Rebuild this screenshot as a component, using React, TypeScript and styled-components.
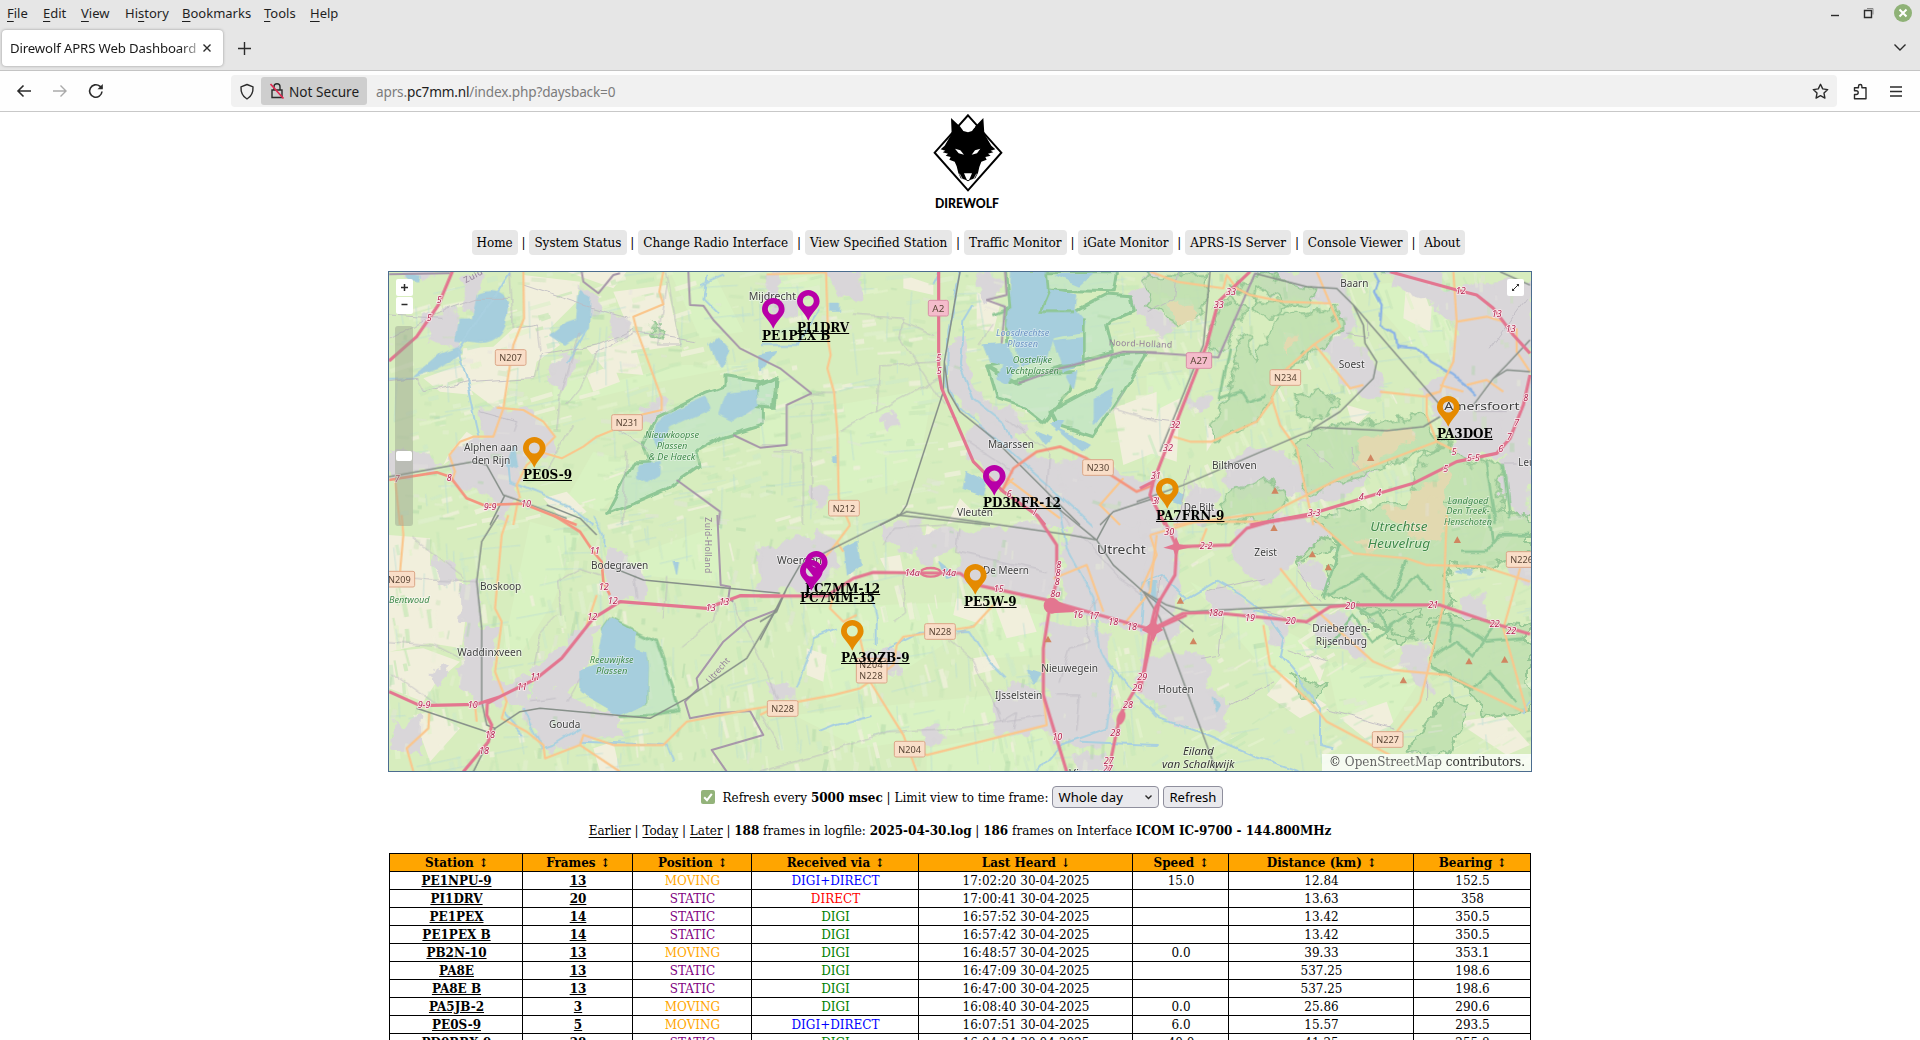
import React from 'react';
import styled, { createGlobalStyle } from 'styled-components';

const serif = '"DejaVu Serif Condensed", "DejaVu Serif", serif';
const ui = '"Noto Sans", "Open Sans", sans-serif';

const Global = createGlobalStyle`
  html, body { margin: 0; padding: 0; background: #fff; }
  body { width: 1920px; height: 1040px; overflow: hidden; }
  * { box-sizing: border-box; }
`;

const Window = styled.div`
  width: 1920px;
  height: 1040px;
  overflow: hidden;
  display: flex;
  flex-direction: column;
  font-family: ${serif};
  font-size: 13.33px;
  color: #000;
`;

/* ---------- browser chrome ---------- */
const TitleBar = styled.div`
  height: 28px;
  flex: none;
  display: flex;
  background: #e6e6e6;
  font: 13px/27px ${ui};
  color: #1f1f1f;
  padding-left: 7px;
`;
const MenuItem = styled.span<{ $w: number }>`
  width: ${(p) => p.$w}px;
  white-space: nowrap;
`;
const Accel = styled.span`
  text-decoration: underline;
  text-underline-offset: 3px;
`;
const WindowButtons = styled.div`
  margin-left: auto;
`;
const TabStrip = styled.div`
  height: 43px;
  flex: none;
  display: flex;
  background: #e6e6e6;
  border-bottom: 1px solid #c4c4c4;
  padding: 2px 0 0 2px;
`;
const Tab = styled.div`
  width: 221px;
  height: 36px;
  background: #fff;
  border-radius: 4px;
  box-shadow: 0 0 3px rgba(0, 0, 0, 0.35);
  display: flex;
  align-items: center;
  padding: 0 11px 0 8px;
  justify-content: space-between;
`;
const TabTitle = styled.span`
  width: 188px;
  overflow: hidden;
  white-space: nowrap;
  font: 13.2px/20px ${ui};
  letter-spacing: -0.13px;
  color: #1a1a1a;
  mask-image: linear-gradient(to right, #000 170px, rgba(0, 0, 0, 0.3) 188px);
`;
const NewTab = styled.div`
  padding: 12px 0 0 15px;
`;
const TabList = styled.div`
  margin-left: auto;
  padding: 13px 13px 0 0;
`;
const Toolbar = styled.div`
  height: 41px;
  flex: none;
  display: flex;
  align-items: center;
  background: #fefefe;
  border-bottom: 1px solid #c8c8c8;
  padding: 0 17px 0 16px;
`;
const NavButtons = styled.div`
  width: 215px;
  display: flex;
  gap: 20px;
`;
const UrlBar = styled.div`
  width: 1606px;
  height: 32px;
  border-radius: 4px;
  background: #f1f1f1;
  display: flex;
  align-items: center;
  padding: 0 8px;
`;
const Identity = styled.div`
  width: 106px;
  height: 28px;
  margin-left: 6px;
  border-radius: 3px;
  background: #cecece;
  display: flex;
  align-items: center;
  gap: 4px;
  padding-left: 8px;
  font: 13.6px/29px ${ui};
  color: #1d1d1d;
  white-space: nowrap;
`;
const Url = styled.span`
  margin-left: 9px;
  flex: 1;
  font: 13.6px/29px ${ui};
  letter-spacing: -0.16px;
  color: #7c7c7c;
  b { font-weight: 400; color: #1d1d1d; }
`;
const ToolbarEnd = styled.div`
  display: flex;
  gap: 20px;
  margin-left: 15px;
`;
const Icon = styled.svg`
  display: block;
  flex: none;
  fill: none;
  stroke: #2b2b2b;
  stroke-width: 1.4;
`;

/* ---------- page ---------- */
const Page = styled.div`
  flex: 1;
  display: flex;
  flex-direction: column;
  align-items: center;
`;
const Logo = styled.svg`
  width: 140px;
  height: 106px;
  margin: -1px 0 0 20px;
  flex: none;
`;
const Nav = styled.nav`
  display: flex;
  justify-content: space-between;
  align-items: center;
  width: 994px;
  height: 25px;
  margin: 13px 0 0 17px;
`;
const NavLink = styled.a`
  background: #e7e7e7;
  border-radius: 4px;
  height: 25px;
  line-height: 25px;
  padding: 0 5px;
  white-space: nowrap;
`;
const MapBox = styled.div`
  position: relative;
  width: 1144px;
  height: 501px;
  margin-top: 16px;
  flex: none;
  border: 1px solid #4b6c8f;
  overflow: hidden;
`;
const MapCanvas = styled.svg`
  display: block;
  width: 1142px;
  height: 499px;
`;
const Pin = styled.div<{ $x: number; $y: number }>`
  position: absolute;
  left: ${(p) => p.$x - 389}px;
  top: ${(p) => p.$y - 272}px;
  svg { display: block; }
`;
const PinLabel = styled.b`
  display: block;
  margin-top: -2px;
  line-height: 16px;
  white-space: nowrap;
  text-decoration: underline;
`;
const MapButton = styled.div<{ $x: number; $y: number }>`
  position: absolute;
  left: ${(p) => p.$x}px;
  top: ${(p) => p.$y}px;
  width: 17px;
  height: 17px;
  border-radius: 2px;
  background: #fff;
  display: flex;
  align-items: center;
  justify-content: center;
`;
const Slider = styled.div`
  position: absolute;
  left: 6px;
  top: 54px;
  width: 18px;
  height: 200px;
  border-radius: 3px;
  padding: 125px 1px 0;
  background: rgba(150, 160, 140, 0.45);
`;
const Thumb = styled.div`
  height: 10px;
  border-radius: 2px;
  background: #fff;
`;
const Attribution = styled.div`
  position: absolute;
  right: 0;
  bottom: 0;
  width: 209px;
  height: 17px;
  background: rgba(255, 255, 255, 0.78);
  padding-left: 7px;
  line-height: 16px;
  font-size: 13.33px;
  color: #333;
  white-space: nowrap;
  span { color: #666; }
`;
const Controls = styled.div`
  display: flex;
  align-items: center;
  height: 22px;
  margin: 14px 0 0 4px;
  white-space: nowrap;
`;
const CheckBox = styled.span`
  width: 14px;
  height: 14px;
  border-radius: 2px;
  background: #93b37a;
  margin: -1px 8px 0 0;
`;
const Field = styled.span<{ $w: number }>`
  width: ${(p) => p.$w}px;
  height: 22px;
  margin-left: 4px;
  border: 1px solid #8f8f9d;
  border-radius: 4px;
  background: #e9e9ed;
  display: flex;
  align-items: center;
  justify-content: space-between;
  padding: 0 5px;
  font: 13.1px/20px ${ui};
`;
const Summary = styled.div`
  height: 18px;
  line-height: 18px;
  margin-top: 13px;
  white-space: nowrap;
  u { text-underline-offset: 2px; }
`;
const Table = styled.table`
  width: 1142px;
  margin-top: 14px;
  table-layout: fixed;
  border-collapse: collapse;
  text-align: center;
  line-height: 16px;
  th, td { border: 1px solid #000; padding: 0 0 1px 1px; height: 18px; white-space: nowrap; line-height: 15px; }
  th { background: #ffa500; }
`;
const Arrow = styled.span`
  display: inline-block;
  margin-left: 1px;
  font-size: 12px;
  line-height: 14px;
`;
const Cell = styled.td<{ $c?: string }>`
  color: ${(p) => p.$c ?? '#000'};
`;
const LinkCell = styled.td`
  font-weight: 700;
  text-decoration: underline;
`;

/* ---------- map data ----------
   Geometry is authored at three units per pixel in six sheets. */
const sheets: Record<string, [number, number]> = {
  A: [0, 0], B: [1140, 0], C: [2280, 0], D: [0, 750], E: [1140, 750], F: [2280, 750],
};
type Shape = [string, string];

const beige: Shape[] = [
  ['A', 'M250 250L340 245 400 190 500 180 540 240 470 290 460 340 390 345 370 425 345 430 240 350z M130 340L240 300 280 390 180 380z M430 30L600 50 590 110 510 190 430 180z M700 80L860 60 900 240 770 260 790 330 680 320 620 250 750 200z M620 330L700 300 720 350 640 380z M560 20L740 20 700 70z M190 600L210 560 260 500 290 520z M490 700L560 680 620 740 560 780z'],
  ['D', 'M27 60L150 70 150 150 250 205 258 300 245 400 150 385 27 410z M27 410L130 400 240 440 170 500 130 560 27 520z M100 600L160 590 240 640 150 740z M640 700L700 680 720 770 660 770z'],
  ['B', 'M240 30L290 30 280 70z M430 30L520 60 520 90 430 70z M650 80L720 120 700 200 650 190z M1060 430L1190 380 1190 560 1090 600z M560 780L600 700 640 740z'],
  ['E', 'M500 30L560 60 540 110 490 100z M590 250L680 260 670 330 580 300z M700 260L800 270 830 350 740 370z M360 130L420 120 430 170 380 170z M140 400L200 420 190 500 140 480z M640 430L700 420 720 460 640 480z'],
  ['C', 'M60 100L150 100 180 160 110 180z M620 420L690 440 640 490z M430 200L480 210 430 260z M20 560L60 430 120 400 110 590z M800 40L880 60 870 200 790 160z M200 480L260 460 200 560z'],
  ['F', 'M380 540L430 480 560 570 480 610z M480 380L560 440 540 500z M950 620L1090 600 1170 690 1100 720z M600 610L740 560 760 620 700 690z M1040 40L1120 60 1090 110 1020 110z'],
];
const lightGreen: Shape[] = [
  ['A', 'M560 420L840 350 1100 300 900 300 700 350z M640 560L800 600 660 740 560 700z M870 20L1000 20 1090 200 960 220z M520 350L620 340 640 400 520 420z'],
  ['B', 'M20 20L180 20 180 100 60 80z M0 270L150 380 80 430 80 540 0 540z M230 420L520 370 470 640 240 700z M620 60L720 60 700 140z'],
  ['C', 'M680 60L900 40 940 260 840 270 720 130z M20 330L160 330 60 560 20 600z'],
  ['D', 'M450 20L600 60 520 260 420 420 370 400z M730 130L1020 30 1020 200 760 180z'],
  ['E', 'M140 280L600 260 850 300 840 420 700 430 640 330 380 500 200 560z M100 600L700 540 720 640 300 700z M500 700L850 640 900 770 500 770z'],
  ['F', 'M150 200L500 380 560 560 420 520z M560 440L850 480 760 620 600 620z'],
];
const urban: Shape[] = [
  ['A', 'M240 40L300 30 300 120 260 140z M130 150L230 140 240 250 150 230z M300 430L430 425 520 500 515 560 420 580 400 700 380 770 330 690 220 650 205 560 330 515 300 490z M50 560L130 560 170 600 90 620z M700 150L750 170 740 220 690 210z M505 330L560 260 585 280 550 380z M785 430L860 400 860 460 790 470z M600 70L660 90 640 150z M80 20L160 20 120 50z M1150 50L1200 20 1200 110 1160 110z M30 560L100 570 90 640 30 640z'],
  ['D', 'M45 620L60 640 120 600 110 720 40 700z M150 140L210 140 240 190 180 210z M250 205L290 205 300 340 355 340 340 500 440 480 450 560 380 570 300 560 250 520 245 400 255 300z M460 470L600 350 660 330 590 500 550 530 520 520 460 570z M440 560L560 520 620 580 700 600 730 660 600 670 510 710 450 640z M670 130L705 100 770 150 800 250 690 250z M1130 130L1200 130 1200 220 1150 190z M150 480L200 460 190 510z'],
  ['B', 'M200 20L290 20 300 100 240 90z M20 90L110 110 110 150 40 140z M575 230L605 230 640 360 700 440 760 430 800 500 700 520 640 450 570 370z M610 500L720 470 800 560 870 590 930 600 1000 680 1000 780 870 780 740 680 620 560z M360 460L410 450 420 480 380 490z M880 600L960 580 1110 640 1190 650 1190 780 960 780z M1110 80L1170 80 1180 150 1130 150z M150 670L200 670 180 730z M740 600L800 620 760 680z M650 50L700 20 730 60 680 130z'],
  ['E', 'M0 100L170 60 220 80 230 140 180 220 90 220 0 220z M590 50L700 40 850 20 890 120 890 250 700 220 600 200z M360 30L490 20 450 120 370 70z M950 20L1190 30 1190 350 1100 340 920 280 910 100z M860 320L1040 350 1050 500 1060 650 1000 690 870 680z M700 550L760 500 860 540 860 640 720 660z M30 500L90 510 90 550 40 560z M290 430L420 400 420 470 350 480z M490 650L540 640 540 670 500 680z M940 730L1030 710 1040 770 960 770z M440 60L580 50 590 90 500 140z'],
  ['C', 'M20 20L110 40 130 80 60 90 20 70z M340 20L600 20 650 180 600 220 590 110 400 90z M520 220L620 220 710 300 720 390 640 380z M720 20L890 20 930 90 1060 50 1170 50 1170 640 1100 560 1030 430 880 410 850 370 940 300 950 170z M880 420L980 430 1080 440 1090 560 960 580z M1080 580L1170 560 1170 780 1090 700z M260 590L300 560 430 560 500 650 520 690 310 690 250 640z M150 650L230 680 200 780 110 780z M20 130L100 180 60 210 20 180z M150 410L210 400 180 440z M480 720L620 620 700 620 640 680 560 700z'],
  ['F', 'M0 20L110 50 110 350 50 380 0 350z M290 60L340 20 520 10 570 60 440 160 380 210 290 150z M210 230L270 220 340 290 210 290z M380 300L440 320 430 390 380 380z M0 430L190 420 210 520 260 570 240 640 100 640 60 560 0 530z M530 300L610 300 680 380 680 430 540 360z M470 160L550 150 560 240z M780 400L850 390 860 480 880 530 850 510 790 440z M960 250L1030 240 1040 310 970 300z M1110 140L1170 140 1170 200 1130 190z'],
];
const forest: Shape[] = [
  ['C', 'M340 25L500 70 530 65 500 120 340 100 260 60 320 140 240 270 200 260 220 150z M350 60L340 150 500 150 580 120 600 190 460 300 400 400 350 470 220 530 215 480 260 410 270 330 310 200 330 210 330 300 400 180 440 110z M20 30L200 30 200 130 110 180 30 120z M470 400L550 370 600 420 500 480z M520 490L860 450 900 540 700 620 500 690 470 560z M250 690L400 640 440 710 400 770 230 770z M860 560L920 540 1000 600 1070 580 1090 770 800 770 820 650z'],
  ['F', 'M520 10L860 -60 1170 0 1170 100 1040 160 920 150 940 260 850 380 680 320 650 260 540 240 600 90z M460 160L540 70 600 90z M870 300L1060 320 1170 330 1170 590 1040 600 990 520 870 460z M450 470L560 520 530 560 480 540z M920 540L980 570 930 720 800 710z M650 280L840 290 780 390z'],
  ['A', 'M820 180L850 190 840 220 815 210z'],
];
const heath: Shape[] = [
  ['C', 'M640 530L820 480 830 520 700 600 640 590z M800 690L930 610 920 780 780 780z M430 210L480 210 440 265z M90 110L160 110 165 160 110 180z'],
  ['F', 'M730 -20L920 -50 900 90 800 60z M640 60L720 90 690 120z'],
];
const water: Shape[] = [
  ['A', 'M295 85C340 65 380 85 385 130C380 200 350 235 300 235L225 225 235 165 280 165z M510 210L560 170 590 160 600 80 630 95 625 190 555 240z M100 335L180 265 235 245 245 260 170 310z M75 25L120 30 115 50 80 45z M990 240L1010 220 1045 260 1020 310z M865 450L980 400 990 430 870 485 830 540 820 520 830 480z M1040 385L1130 375 1135 420 1060 470 1020 450z M770 600L840 590 840 630 800 655 770 640z M380 600L400 540 410 610z'],
  ['B', 'M755 20L860 20 865 75 950 90 945 135 975 170 965 200 880 215 860 290 780 300 770 240 740 180 750 100z M670 240L740 235 770 300 740 355 710 340 730 300 690 290z M880 225L970 215 960 300 910 320z M0 270L50 260 0 320z M620 620L680 650 670 690 610 670z M830 500L880 520 860 540z M890 490L990 540 970 560z M215 115L235 115 235 135 215 135z M870 470L910 470 890 500z M215 570L230 570 230 590 215 590z M920 330L950 320 940 370z M1000 400L1060 370 1040 440 1000 480z M890 30L1000 25 960 60z'],
  ['D', 'M670 340L690 312 740 340 770 350 765 400 800 410 805 460 800 560 720 600 600 530 600 470 650 450z M880 140L895 140 890 180z'],
  ['E', 'M250 100L290 80 300 150 260 180z M800 460L840 470 820 510z M540 140L590 180 560 190z M1170 200L1190 200 1190 300z'],
  ['C', 'M100 680L130 690 120 720 90 710z'],
  ['F', 'M220 550L240 570 230 590z M950 170L1000 160 990 180z'],
];
const marsh: Shape[] = [
  ['A', 'M1035 335L1140 350 1195 335 1185 430 1150 420 1150 480 1020 520 950 560 960 600 860 670 790 700 680 745 760 590 810 590 790 540 830 460 980 385 1035 365z'],
  ['B', 'M740 130L870 75 840 140 945 140 1040 90 1110 95 1120 140 1050 170 1040 180 1060 258 900 305 775 355 680 300 740 290z M760 20L1070 20 1060 80 860 75z M-10 360L50 335 40 430 -10 425z M870 440L1000 370 1060 270 1160 265 1090 380 1000 515 890 480z M680 300L750 350 870 320 940 320 930 380 850 470 800 430 710 400z'],
  ['D', 'M670 340L690 312 770 350 830 380 880 520 900 590 830 600 720 605 710 580 800 560 800 430z'],
];
const canals: Shape[] = [
  ['A', 'M235 255L260 340 290 480 300 520 M27 345L100 340 M385 590L390 650 560 720 640 780 M240 250L390 20 M960 60L1030 30 M980 30L970 100 1020 150 M620 190L560 300'],
  ['B', 'M600 20L565 200 560 360 600 430 840 640 1000 780 M540 20L520 60 M640 120L610 170 600 300 640 400 730 470 750 520 M0 240L110 240 180 130'],
  ['E', 'M890 -60L920 100 1000 250 1020 400 1060 480 1040 640 900 690 830 770 M330 230L350 310 350 390 M110 520L150 420 160 370 230 340 M380 400L480 350 630 345 690 440 740 490 M180 650L230 630 340 600 M960 680L1190 690 M1040 440L1190 610'],
  ['F', 'M0 560L60 610 200 660 340 720 480 770 M130 260L230 200 300 240 380 300 430 370 420 420 470 480 540 580 540 690 580 700 M0 350L10 200 60 180 140 250 M340 290L420 310 M1170 560L1150 600'],
  ['D', 'M430 580L490 700 520 690 600 640 M600 680L860 690 880 740 M370 590L430 660 M640 0L670 60 670 100'],
];
const rivers: Shape[] = [
  ['C', 'M700 20L715 50 705 80 725 120 720 180 770 210 775 245 830 250 870 290 940 330 980 360 1010 390'],
];
const minor: Shape[] = [
  ['A', 'M27 225L200 130 290 100 390 100 M130 380L260 350 460 338 480 270 650 240 760 190 M390 20L400 190 M480 260L470 180 410 190 M430 60L640 130 740 160 M530 500L540 400 570 300 600 200 M640 270L760 200 950 230 M27 350L110 340 130 380 M400 500L410 470 300 440 M860 50L830 240 900 240 M650 260L600 370 560 420 M700 490L820 560 M580 480L500 620 M740 560L730 780 M860 20L900 240 M27 150L190 160'],
  ['B', 'M240 500L350 440 540 340 M350 440L360 300 540 290 M270 150L430 160 420 220 550 420 M150 385L230 385 M155 400L155 700 M40 560L130 560 130 780 M0 540L80 540 M430 170L530 210 M740 460L870 560 M1060 430L1190 470 M870 560L860 680 930 780 M620 530L760 620 M1090 380L1060 440 M700 180L660 240'],
  ['D', 'M27 180L150 195 290 200 M540 300L530 200 600 160 660 180 M460 450L480 350 530 300 M27 380L160 390 240 430 M30 470L170 570 M560 560L600 490 M620 590L700 600 M760 180L770 250 M860 180L850 310 M1060 260L1150 450 1190 550 M450 560L530 550 M900 400L1000 320 1010 260 M100 70L250 190'],
  ['E', 'M430 180L440 290 400 320 M600 40L590 110 860 170 M900 500L930 400 990 380 980 300 1020 250 M700 560L720 620 770 590 760 640 M0 600L60 700 M0 770L180 720 380 650 600 640 850 600 M960 540L950 650 M890 540L960 540 M640 330L560 370 640 440 720 600 M960 60L1080 190 1190 260 M370 90L400 40 560 30'],
  ['C', 'M110 20L100 100 20 140 M620 210L680 220 680 160 M150 600L110 780 M500 540L580 610 M20 460L100 470 M640 540L640 590 690 640 M1160 100L1050 250 M1100 440L1000 440 M1090 600L1130 600'],
  ['F', 'M60 180L50 290 M250 300L240 420 180 430 M440 400L560 440 M270 570L400 500 M560 580L760 640 M860 500L860 560 M340 280L520 330 M470 170L540 260 M380 190L200 230'],
];
const orange: Shape[] = [
  ['A', 'M430 20L432 160 400 240 385 330 370 430 340 515 280 515 240 530 208 570 225 620 215 650 M350 428L430 435 490 470 525 515 480 560 545 580 610 545 650 515 700 495 M850 20L838 80 850 118 760 155 770 195 845 400 845 435 780 450 M740 460L720 480 M420 700L410 660 440 600 470 575 M415 700L400 780 M45 640L60 780'],
  ['B', 'M198 20L205 230 212 270 202 310 222 380 232 500 236 700 270 780 M20 28L200 22'],
  ['D', 'M65 0L70 60 60 170 M385 0L365 60 345 280 365 320 345 470 380 560 365 610 440 650 490 690 495 730 600 690 610 660 700 690 850 690 920 620 1100 585 1160 575 M285 570L290 620 M148 590L145 640 80 700 100 770 M600 690L720 770 M650 240L620 330'],
  ['E', 'M0 600L60 570 220 540 300 520 400 450 410 390 430 365 640 335 700 270 M300 370L330 500 430 660 470 770 M450 700L500 720 860 630 850 540 M230 80L250 110 M170 150L210 110 270 30 M880 190L980 150 1030 290 M1090 330L1170 230 1190 60 M220 240L210 280 250 320 290 300'],
  ['B', 'M720 680L760 640 M1090 640L1020 720 1080 780 M740 640L900 760'],
  ['C', 'M30 20L110 50 250 70 260 30 290 70 330 90 430 110 570 115 M530 20L570 115 600 185 520 240 430 320 395 400 420 480 470 550 500 690 520 780 M400 400L350 470 215 530 150 530 100 515 M525 240L630 370 670 360 M720 380L860 395 900 380 M940 20L950 170 940 290 910 350 900 380 860 390 860 450 890 530 950 560 M950 170L1040 155 1090 170 M1130 190L1130 260 1170 320 M980 360L1040 345 1090 380 M890 530L600 640 400 740 100 780 M970 380L900 360'],
  ['F', 'M520 10L640 115 800 130 860 150 1030 155 1170 200 M1140 160L1110 270 1090 340 1160 590 M420 160L500 260 700 440 760 465 920 480 1150 590 M370 330L390 450 510 560 560 620 750 720 M860 480L840 560 770 650 M920 0L910 270 860 480 M30 60L50 120 0 230 M30 60L170 20 400 20 M200 40L180 90'],
];
const provincial: Shape[] = [
  ['A', 'M605 20L610 50 655 85 700 30 720 25 M925 20L930 120 970 122 1000 165 1080 250 1200 310 1294 385 1220 420 1220 540 1140 548 1060 510 M890 645L1020 740 1015 780 M27 28L210 25'],
  ['B', 'M735 20L740 90 680 105 735 125 725 235 M775 355L900 310 1090 260 1190 262'],
  ['C', 'M20 262L235 277 345 25'],
  ['D', 'M1012 0L1022 210 1050 215 1045 250 1060 260 M1190 285L1100 320 1030 380 950 490 955 520 915 560 930 610 1010 595 1110 588 1150 660 995 705 1040 770'],
];
const rail: Shape[] = [
  ['A', 'M27 635L280 590 320 600 370 690 400 700 560 760 M375 690L330 780'],
  ['B', 'M600 20L553 290 550 380 440 720 420 750 360 780 M553 290L565 380 600 440 700 520 960 780 M410 750L690 780 M1020 780L1060 740 1180 700'],
  ['C', 'M-10 710L130 660 480 510 540 487 740 497 850 485 900 455 M345 25L500 65 590 70 640 120 900 420 M640 120L670 180 675 235 710 290 700 340 600 440 520 490 M1000 420L1060 340 1100 300 1170 225 M1060 340L1100 315 1170 320 M210 20L190 240 60 560 M1080 20L1170 60'],
  ['D', 'M355 0L305 80 290 200 305 340 305 560 320 630 345 640 420 590 480 580 810 610 920 550 1100 430 1190 280 M690 155L790 195 1200 235 M110 580L320 650 M345 640L280 770 M500 -30L600 10 650 60'],
  ['E', 'M0 375L80 220 120 150 400 10 440 -10 930 60 1010 75 1060 150 1150 230 1300 350 M870 -40L1010 75 M1010 75L1050 0 M0 320L50 290 80 220'],
  ['F', 'M10 230L80 270 150 290 520 270 900 270 M10 230L60 310 230 770'],
];
const trunk: Shape[] = [
  ['A', 'M27 645L170 622 210 635 260 700 310 720 430 716 490 740 590 780'],
  ['D', 'M520 0L600 50 640 110 665 140 670 200 690 240'],
  ['B', 'M725 680L760 610 830 560 900 545 980 580 1060 635 1130 680 1180 660'],
];
const motorway: Shape[] = [
  ['A', 'M217 20L175 120 110 215 27 288'],
  ['B', 'M536 20L536 320 545 370 640 590 730 680 830 750 855 780'],
  ['C', 'M330 20L235 110 200 240 110 470 40 650 30 690 75 780 M750 20L950 75 1010 90 1060 130 1120 210 1170 265 M1170 330L1150 420 1110 520 1070 565 950 590 820 655 700 690 520 745 330 780 M40 650L0 670'],
  ['D', 'M27 530L120 572 290 568 360 545 470 490 545 430 640 310 720 260 980 280 1080 242 1200 243 M360 545L322 565 320 600 335 630 325 680 250 770'],
  ['E', 'M0 243L200 243 280 190 340 172 600 175 650 210 860 255 1000 295 1180 345 1280 300 M830 0L890 90 890 200 870 270 850 400 850 540 920 770 M1180 345L1150 480 1080 600 1045 770 M1180 345L1200 250'],
  ['F', 'M75 20L110 95 270 90 320 40 390 20 520 0 M110 95L105 180 45 280 30 345 10 480 0 530 M30 345L130 295 210 292 500 320 570 275 640 270 900 270 1060 325 1170 357'],
];
const border: Shape[] = [
  ['F', 'M550 250L600 90 580 70 M560 240L670 180 750 260 830 180 870 230 M640 270L690 300 720 290 740 340 800 300 M880 320L960 330 1040 380 1150 370 M880 430L950 380 1000 420 1060 340 M930 300L930 380 M870 450L1000 520 1050 470 1130 560 M1050 0L1060 80 M960 110L1040 110 1080 60 1170 60 M800 130L780 190 750 250 M560 400L640 300 700 380 760 330'],
  ['C', 'M720 20L760 20 M1090 600L1110 760 M1040 590L1070 780 M270 250L240 400 300 380 320 410 380 390'],
  ['B', 'M740 20L750 130 700 150 M860 20L865 80 840 140 945 140 M970 160L970 300 880 310'],
];

const shieldData: [string, number, number, string][] = [
  ['A', 392, 278, 'N207'], ['A', 741, 473, 'N231'], ['B', 1014, 608, 'N230'], ['B', 252, 730, 'N212'],
  ['C', 436, 338, 'N234'], ['D', 58, 193, 'N209'], ['E', 540, 350, 'N228'],
  ['E', 68, 581, 'N228'], ['E', 449, 703, 'N204'], ['F', 1145, 134, 'N226'], ['F', 743, 674, 'N227'],
];
const towns: [string, number, number, string, number?, number?][] = [
  ['A', 333, 557, 'Alphen aan', 162], ['A', 333, 596, 'den Rijn', 116],
  ['B', 37, 104, 'Mijdrecht', 142], ['B', 753, 548, 'Maarssen', 138], ['B', 645, 754, 'Vleuten', 108],
  ['C', 643, 67, 'Baarn', 84], ['C', 635, 309, 'Soest', 78], ['C', 283, 611, 'Bilthoven', 134],
  ['C', 177, 739, 'De Bilt', 92], ['C', 1026, 434, 'Amersfoort', 226, 35], ['C', 1193, 604, 'Leusden', 116],
  ['D', 719, 163, 'Bodegraven', 172], ['D', 362, 224, 'Boskoop', 124], ['D', 329, 422, 'Waddinxveen', 194],
  ['D', 554, 638, 'Gouda', 94], ['E', 118, 146, 'Woerden', 134], ['E', 738, 177, 'De Meern', 138],
  ['E', 1084, 118, 'Utrecht', 146, 37], ['E', 929, 472, 'Nieuwegein', 170], ['E', 776, 553, 'IJsselstein', 142],
  ['F', 377, 123, 'Zeist', 68], ['F', 604, 350, 'Driebergen-', 174], ['F', 604, 389, 'Rijsenburg', 154],
  ['F', 108, 534, 'Houten', 106],
];
type Italic = [string, number, number, string, number, string, number];
const green = '#3f8a4a';
const italics: Italic[] = [
  ['A', 876, 519, 'Nieuwkoopse', 162, green, 26], ['A', 876, 552, 'Plassen', 92, green, 26], ['A', 876, 585, '& De Haeck', 140, green, 26],
  ['B', 788, 212, 'Loosdrechtse', 160, '#6b93c4', 26], ['B', 788, 245, 'Plassen', 92, '#6b93c4', 26],
  ['B', 817, 295, 'Oostelijke', 118, green, 26], ['B', 817, 328, 'Vechtplassen', 160, green, 26],
  ['D', 695, 444, 'Reeuwijkse', 132, green, 26], ['D', 695, 476, 'Plassen', 94, green, 26], ['D', 88, 265, 'Bentwoud', 122, green, 26],
  ['C', 984, 716, 'Landgoed', 122, green, 26], ['C', 984, 748, 'Den Treek-', 130, green, 26], ['C', 984, 780, 'Henschoten', 144, green, 26],
  ['F', 777, 48, 'Utrechtse', 172, green, 37], ['F', 777, 99, 'Heuvelrug', 188, green, 37],
  ['F', 175, 720, 'Eiland', 92, '#333', 32], ['F', 175, 760, 'van Schalkwijk', 218, '#333', 32],
  ['E', 980, 786, 'Vianen', 110, '#444', 30],
];
const exits: [string, number, number, string][] = [
  ['A', 178, 114, '5'], ['A', 148, 168, '5'], ['A', 52, 652, '7'], ['A', 208, 648, '8'], ['A', 330, 736, '9-9'], ['A', 438, 725, '10'],
  ['B', 536, 288, '5'], ['B', 538, 326, '5'], ['B', 748, 696, '6'], ['B', 824, 750, '7'], ['B', 1182, 640, '3'], ['B', 1190, 718, '3'],
  ['C', 273, 90, '33'], ['C', 236, 130, '33'], ['C', 106, 490, '32'], ['C', 84, 557, '32'], ['C', 47, 643, '31'], ['C', 44, 716, '3'],
  ['C', 962, 87, '12'], ['C', 1070, 155, '13'], ['C', 1112, 202, '13'], ['C', 1157, 407, '8'], ['C', 1130, 484, '7'], ['C', 1108, 524, '7'],
  ['C', 1082, 560, '6'], ['C', 1000, 589, '5-5'], ['C', 942, 570, '5'], ['C', 917, 620, '5'], ['C', 664, 704, '4'], ['C', 716, 694, '4'], ['C', 522, 753, '3-3'],
  ['D', 644, 117, '11'], ['D', 671, 224, '12'], ['D', 698, 266, '12'], ['D', 637, 315, '12'], ['D', 992, 288, '13'], ['D', 1033, 270, '13'],
  ['D', 466, 495, '11'], ['D', 426, 524, '11'], ['D', 132, 580, '9-9'], ['D', 278, 578, '10'], ['D', 330, 668, '18'], ['D', 312, 717, '18'],
  ['E', 457, 182, '14a'], ['E', 566, 184, '14a'], ['E', 716, 230, '15'], ['E', 896, 158, '8'], ['E', 894, 184, '8'], ['E', 892, 210, '8'],
  ['E', 886, 247, '8a'], ['E', 954, 308, '16'], ['E', 1002, 312, '17'], ['E', 1060, 330, '18'], ['E', 1116, 346, '18'],
  ['E', 1147, 494, '29'], ['E', 1132, 529, '29'], ['E', 1104, 579, '28'], ['E', 1066, 664, '28'], ['E', 1046, 746, '27'], ['E', 1043, 771, '27'], ['E', 892, 674, '10'],
  ['F', 88, 60, '30'], ['F', 198, 101, '2-2'], ['F', 227, 304, '18a'], ['F', 330, 318, '19'], ['F', 452, 328, '20'], ['F', 631, 282, '20'],
  ['F', 880, 280, '21'], ['F', 1064, 336, '22'], ['F', 1114, 358, '22'],
];
const peaks: Shape[] = [
  ['C', '692 578'], ['C', '405 676'], ['F', '402 38'], ['F', '517 117'], ['F', '565 156'], ['F', '952 74'], ['F', '121 256'],
  ['F', '160 378'], ['F', '987 438'], ['F', '1094 433'], ['F', '790 495'], ['E', '864 372'],
];

/* Narrow polder parcels, laid out from a fixed seed. */
const makeParcels = (seed: number, count: number, colours: string[]) => {
  let s = seed;
  const r = () => ((s = (s * 16807) % 2147483647) / 2147483647);
  return Array.from({ length: count }, () => {
    const x = 27 + r() * 3426, y = 20 + r() * 1500;
    const a = x < 1300 ? (y < 800 ? -20 : 75) : x < 2300 ? (y < 800 ? -12 : 72) : y < 750 ? 62 : -35;
    return { x, y, a: a + r() * 10, w: 15 + r() * 60, h: 4 + r() * 12, c: colours[Math.floor(r() * colours.length)] };
  });
};
const parcels = makeParcels(4711, 1500, ['#f1f0dd', '#c9e8b8', '#e3f2cc', '#cbe8ba', '#dfefcd', '#cfeac6']);
const speckles = makeParcels(77, 700, ['#e9f0d6', '#a9d4a4', '#c5e3b4', '#e4e1df']);
const ditches = (() => {
  let s = 923;
  const r = () => ((s = (s * 16807) % 2147483647) / 2147483647);
  return Array.from({ length: 520 }, () => {
    const x = 27 + r() * 3426, y = 20 + r() * 1500, l = 30 + r() * 110;
    const a = ((r() > 0.5 ? 80 : -15) + r() * 14) * Math.PI / 180;
    return `M${x.toFixed(0)} ${y.toFixed(0)}l${(Math.cos(a) * l).toFixed(0)} ${(Math.sin(a) * l).toFixed(0)}`;
  }).join('');
})();

const Layer = ({ data, ...rest }: { data: Shape[] } & React.SVGProps<SVGGElement>) => (
  <g fill="none" {...rest}>
    {data.map(([s, d], i) => <path key={i} d={d} transform={`translate(${sheets[s][0]} ${sheets[s][1]})`} />)}
  </g>
);

const Shield = ({ x, y, children, wide = true }: { x: number; y: number; children: string; wide?: boolean }) => {
  const w = wide ? 92 : children === 'A2' ? 60 : 76;
  return (
    <g>
      <rect x={x - w / 2} y={y - 24} width={w} height={47} rx={5} fill={wide ? '#f9dec8' : '#f4bccb'} stroke={wide ? '#dba788' : '#d990a6'} strokeWidth={3} />
      <text x={x} y={y + 10} textAnchor="middle" fontSize={27} fill="#5b4636" textLength={w - 24} lengthAdjust="spacingAndGlyphs">{children}</text>
    </g>
  );
};

const MapDrawing = () => (
  <MapCanvas viewBox="27 21 3426 1497" preserveAspectRatio="none" fontFamily='"Noto Sans", sans-serif'>
    <defs>
      <filter id="rough" filterUnits="userSpaceOnUse" x="0" y="0" width="3480" height="1540">
        <feTurbulence type="fractalNoise" baseFrequency="0.022" numOctaves="3" seed="8" />
        <feDisplacementMap in="SourceGraphic" scale="58" xChannelSelector="R" yChannelSelector="G" />
      </filter>
      <filter id="wavy" filterUnits="userSpaceOnUse" x="0" y="0" width="3480" height="1540">
        <feTurbulence type="fractalNoise" baseFrequency="0.016" numOctaves="2" seed="3" />
        <feDisplacementMap in="SourceGraphic" scale="22" xChannelSelector="R" yChannelSelector="G" />
      </filter>
    </defs>
    <rect x="0" y="0" width="3480" height="1540" fill="#d7edbe" />
    <Layer data={lightGreen} fill="#d9f2c2" />
    <Layer data={beige} fill="#f1efdc" />
    <g opacity="0.75">
      {parcels.map((p, i) => <rect key={i} x={p.x} y={p.y} width={p.w} height={p.h} fill={p.c} transform={`rotate(${p.a} ${p.x} ${p.y})`} />)}
    </g>
    <path d={ditches} stroke="#b9dcd4" strokeWidth="2" fill="none" />
    <Layer data={urban} fill="#d9d6d9" stroke="#d9d6d9" strokeWidth="8" strokeLinejoin="round" filter="url(#rough)" />
    <Layer data={forest} fill="#c0dfb0" fillOpacity="0.85" stroke="#96c795" strokeWidth="6" strokeLinejoin="round" filter="url(#rough)" />
    <Layer data={heath} fill="#e2d9b0" filter="url(#rough)" />
    <Layer data={marsh} fill="#c2e4c4" fillOpacity="0.75" stroke="#8fc796" strokeWidth="9" strokeLinejoin="round" filter="url(#wavy)" />
    <g opacity="0.4">
      {speckles.map((p, i) => <rect key={i} x={p.x} y={p.y} width={p.w * 0.6} height={p.h} fill={p.c} transform={`rotate(${p.a + 20} ${p.x} ${p.y})`} />)}
    </g>
    <Layer data={water} fill="#a6cedd" stroke="#a6cedd" strokeWidth="4" strokeLinejoin="round" filter="url(#wavy)" />
    <Layer data={border} stroke="#8fc796" strokeWidth="8" filter="url(#wavy)" />
    <Layer data={canals} stroke="#a9d0e0" strokeWidth="6" strokeLinejoin="round" filter="url(#wavy)" />
    <Layer data={rivers} stroke="#8db4e6" strokeWidth="7" strokeLinejoin="round" filter="url(#wavy)" />
    <Layer data={minor} stroke="#bdb9c2" strokeWidth="2.5" filter="url(#wavy)" />
    <Layer data={provincial} stroke="#a797aa" strokeWidth="6" strokeLinejoin="round" />
    <Layer data={orange} stroke="#fac68c" strokeWidth="6.5" strokeLinejoin="round" />
    <Layer data={rail} stroke="#87908a" strokeWidth="4.5" strokeLinejoin="round" />
    <Layer data={trunk} stroke="#f4957f" strokeWidth="8" strokeLinejoin="round" />
    <Layer data={motorway} stroke="#e37690" strokeWidth="9.500" strokeLinejoin="round" />
    <g fill="#e37690">
      <circle cx="2015" cy="1022" r="24" /><path d="M2285 1095L2312 1075 2320 1050 2330 1078 2350 1095 2330 1106 2320 1130 2310 1108z M2350 848L2380 838 2388 815 2398 838 2440 845 2396 855 2388 878 2380 855z" />
      <path d="M2015 1000L2100 1040 2015 1045z" />
      <ellipse cx="2223" cy="1358" rx="12" ry="22" transform="rotate(20 2223 1358)" />
      <ellipse cx="1652" cy="922" rx="30" ry="13" fill="none" stroke="#e37690" strokeWidth="7" />
    </g>
    <g fill="#d08560">
      {peaks.map(([s, p], i) => {
        const [x, y] = p.split(' ').map(Number);
        return <path key={i} d={`M${x + sheets[s][0]} ${y + sheets[s][1] - 10}l11 20h-22z`} />;
      })}
    </g>
    {shieldData.map(([s, x, y, t], i) => <Shield key={i} x={x + sheets[s][0]} y={y + sheets[s][1]}>{t}</Shield>)}
    <Shield x={1675} y={130} wide={false}>A2</Shield>
    <Shield x={2457} y={287} wide={false}>A27</Shield>
    <rect x="1429" y="1180" width="92" height="74" rx="5" fill="#f9dec8" stroke="#dba788" strokeWidth="3" />
    <g fontSize="27" fill="#5b4636" textAnchor="middle">
      <text x="1473" y="1210" textLength="70">N204</text>
      <text x="1473" y="1242" textLength="70">N228</text>
    </g>
    <g fontStyle="italic" fontSize="27" fill="#b0254f" stroke="#fbe9ec" strokeWidth="5" paintOrder="stroke" textAnchor="middle">
      {exits.map(([s, x, y, t], i) => <text key={i} x={x + sheets[s][0]} y={y + sheets[s][1]}>{t}</text>)}
    </g>
    <g fill="#404040" stroke="rgba(255,255,255,0.55)" strokeWidth="5" paintOrder="stroke" textAnchor="middle">
      {towns.map(([s, x, y, t, w, f], i) => (
        <text key={i} x={x + sheets[s][0]} y={y + sheets[s][1]} fontSize={f ?? 30} textLength={w} lengthAdjust="spacingAndGlyphs">{t}</text>
      ))}
    </g>
    <g fontStyle="italic" stroke="rgba(255,255,255,0.5)" strokeWidth="4" paintOrder="stroke" textAnchor="middle">
      {italics.map(([s, x, y, t, w, c, f], i) => (
        <text key={i} x={x + sheets[s][0]} y={y + sheets[s][1]} fontSize={f} fill={c} textLength={w} lengthAdjust="spacingAndGlyphs">{t}</text>
      ))}
    </g>
    <g fill="#94809a" fontSize="26" textAnchor="middle">
      <text x="2281" y="245" textLength="190" transform="rotate(2 2281 245)">Noord-Holland</text>
      <text transform="translate(975 841) rotate(90)" textLength="168">Zuid-Holland</text>
      <text transform="translate(1020 1222) rotate(-48)" textLength="92">Utrecht</text>
      <text transform="translate(288 38) rotate(-28)" textLength="70">Zuid-</text>
    </g>
  </MapCanvas>
);

const pins: [string, number, number, string][] = [
  ['PE0S-9', 523, 437, '#e58a00'],
  ['PE1PEX B', 762, 298, '#b800a8'],
  ['PI1DRV', 797, 290, '#b800a8'],
  ['PD3RFR-12', 983, 465, '#b800a8'],
  ['PA3DOE', 1437, 396, '#e58a00'],
  ['PA7FRN-9', 1156, 478, '#e58a00'],
  ['PC7MM-12', 805, 551, '#b800a8'],
  ['PC7MM-15', 800, 560, '#b800a8'],
  ['PE5W-9', 964, 564, '#e58a00'],
  ['PA3OZB-9', 841, 620, '#e58a00'],
];

const columns: [string, string, number][] = [
  ['Station', '↕', 133], ['Frames', '↕', 110], ['Position', '↕', 119], ['Received via', '↕', 167],
  ['Last Heard', '↓', 214], ['Speed', '↕', 96], ['Distance (km)', '↕', 185], ['Bearing', '↕', 117],
];
const rows: string[][] = [
  ['PE1NPU-9', '13', 'MOVING', 'DIGI+DIRECT', '17:02:20', '15.0', '12.84', '152.5'],
  ['PI1DRV', '20', 'STATIC', 'DIRECT', '17:00:41', '', '13.63', '358'],
  ['PE1PEX', '14', 'STATIC', 'DIGI', '16:57:52', '', '13.42', '350.5'],
  ['PE1PEX B', '14', 'STATIC', 'DIGI', '16:57:42', '', '13.42', '350.5'],
  ['PB2N-10', '13', 'MOVING', 'DIGI', '16:48:57', '0.0', '39.33', '353.1'],
  ['PA8E', '13', 'STATIC', 'DIGI', '16:47:09', '', '537.25', '198.6'],
  ['PA8E B', '13', 'STATIC', 'DIGI', '16:47:00', '', '537.25', '198.6'],
  ['PA5JB-2', '3', 'MOVING', 'DIGI', '16:08:40', '0.0', '25.86', '290.6'],
  ['PE0S-9', '5', 'MOVING', 'DIGI+DIRECT', '16:07:51', '6.0', '15.57', '293.5'],
  ['PD0RRX-9', '28', 'STATIC', 'DIGI', '16:04:24', '40.0', '41.25', '255.8'],
];
const tint: Record<string, string> = {
  MOVING: '#ffa500', STATIC: '#800080', DIGI: '#008000', DIRECT: '#ff0000', 'DIGI+DIRECT': '#0000ff',
};
const navItems = ['Home', 'System Status', 'Change Radio Interface', 'View Specified Station', 'Traffic Monitor', 'iGate Monitor', 'APRS-IS Server', 'Console Viewer', 'About'];
const menus: [string, string, string, number][] = [
  ['', 'F', 'ile', 36], ['', 'E', 'dit', 38], ['', 'V', 'iew', 44], ['Hi', 's', 'tory', 57],
  ['', 'B', 'ookmarks', 82], ['', 'T', 'ools', 46], ['', 'H', 'elp', 40],
];

export default function App() {
  return (
    <Window>
      <Global />
      <TitleBar>
        {menus.map(([a, b, c, w]) => <MenuItem key={b} $w={w}>{a}<Accel>{b}</Accel>{c}</MenuItem>)}
        <WindowButtons>
          <Icon width="94" height="27" viewBox="0 0 94 27">
            <path d="M5 15.500h8" />
            <path d="M41 8.500h6v6" stroke="#888" strokeWidth="1" />
            <path d="M38.500 10.500h7v7h-7z" />
            <circle cx="77" cy="13" r="9" fill="#8fb277" stroke="none" />
            <path d="M73.500 9.500l7 7M80.500 9.500l-7 7" stroke="#fff" strokeWidth="2" />
          </Icon>
        </WindowButtons>
      </TitleBar>
      <TabStrip>
        <Tab>
          <TabTitle>Direwolf APRS Web Dashboard</TabTitle>
          <Icon width="10" height="10"><path d="M1.500 1.500l7 7M8.500 1.500l-7 7" /></Icon>
        </Tab>
        <NewTab><Icon width="13" height="13"><path d="M6.500 0v13M0 6.500h13" /></Icon></NewTab>
        <TabList><Icon width="14" height="10"><path d="M1.500 1.500l5.500 5.500 5.500-5.500" /></Icon></TabList>
      </TabStrip>
      <Toolbar>
        <NavButtons>
          <Icon width="16" height="16"><path d="M15 8H2M7.500 2.500L2 8l5.500 5.500" strokeWidth="1.600" /></Icon>
          <Icon width="16" height="16"><path d="M1 8h13M8.500 2.500L14 8l-5.500 5.500" stroke="#aaa" /></Icon>
          <Icon width="16" height="16"><path d="M14 8.500A6.200 6.200 0 1 1 11.800 3.200L14 5.200" strokeWidth="1.600" /><path d="M14.800 1v5.300H9.500z" fill="#2b2b2b" stroke="none" /></Icon>
        </NavButtons>
        <UrlBar>
          <Icon width="16" height="17"><path d="M8 1.500l6 2.300c0.300 5.500-1.200 9.500-6 12.200-4.800-2.700-6.300-6.700-6-12.200z" strokeLinejoin="round" /></Icon>
          <Identity>
            <Icon width="16" height="18"><path d="M3 8h10v7.500H3zM5 8V4.800a3 3 0 0 1 6 0V8" /><path d="M1.500 2l13 14.500" stroke="#e22850" strokeWidth="1.700" /></Icon>
            Not Secure
          </Identity>
          <Url>aprs.<b>pc7mm.nl</b>/index.php?daysback=0</Url>
          <Icon width="17" height="17" viewBox="0 0 17 17"><path d="M8.500 1.300l2.200 4.600 5 0.700-3.700 3.500 0.900 5-4.400-2.400-4.400 2.400 0.900-5L1.300 6.600l5-0.700z" strokeLinejoin="round" /></Icon>
        </UrlBar>
        <ToolbarEnd>
          <Icon width="17" height="17"><path d="M2.500 15.700V11.500h1.800a1.900 1.900 0 0 0 0-3.800H2.500V4.700h4V3.200a1.700 1.700 0 0 1 3.400 0v1.500H14v11z" strokeLinejoin="round" /></Icon>
          <Icon width="14" height="17"><path d="M1 4h12M1 8.500h12M1 13h12" /></Icon>
        </ToolbarEnd>
      </Toolbar>

      <Page>
        <Logo viewBox="0 8 420 318">
          <path d="M204 21L304 133 204 246 104 133z" fill="#fff" stroke="#000" strokeWidth="6" />
          <path d="M153 29L181 55 190 68 204 72 216 68 225 55 250 29 253 76 274 112 286 123 272 127 280 132 264 136 272 142 256 146 260 154 244 160 238 176 234 194 226 210 212 214 204 219 196 214 182 210 175 194 170 174 164 160 148 154 152 146 137 142 144 136 128 132 136 127 122 123 134 112 155 76z" fill="#000" />
          <path d="M182 58L204 36 225 58 215 62 208 54 200 54 193 62z" fill="#fff" />
          <path d="M165 121l16 5 11 13-16-4z M241 121l-16 5-10 13 16-4z M192 195h24l-5 12-4 8h-6l-4-8z" fill="#fff" />
          <path d="M178 196l10 18M230 196l-10 18" stroke="#fff" strokeWidth="2" />
          <text x="105" y="300" fontFamily="Lato, sans-serif" fontWeight="900" fontSize="37" textLength="192" lengthAdjust="spacingAndGlyphs">DIREWOLF</text>
        </Logo>
        <Nav>
          {navItems.map((n, i) => (
            <React.Fragment key={n}>{i > 0 && <span>|</span>}<NavLink>{n}</NavLink></React.Fragment>
          ))}
        </Nav>
        <MapBox>
          <MapDrawing />
          <MapButton $x={7} $y={7}><Icon width="7" height="7"><path d="M3.500 0v7M0 3.500h7" strokeWidth="1.500" /></Icon></MapButton>
          <MapButton $x={7} $y={25}><Icon width="7" height="9"><path d="M0.500 3.500h6" strokeWidth="1.500" /></Icon></MapButton>
          <Slider><Thumb /></Slider>
          <MapButton $x={1118} $y={7}>
            <Icon width="9" height="9"><path d="M2 7l5-5" strokeWidth="1" /><path d="M5.300 1h2.700v2.700zM1 5.300v2.700h2.700z" fill="#333" stroke="none" /></Icon>
          </MapButton>
          {pins.map(([label, x, y, c]) => (
            <Pin key={label} $x={x} $y={y}>
              <svg width="23" height="31" viewBox="0 0 23 31">
                <path fillRule="evenodd" fill={c} d="M11.300 0C5 0 0 5 0 11.200c0 7 7 9.300 11.300 19.600C15.600 20.500 22.600 18.200 22.600 11.200 22.600 5 17.600 0 11.300 0zM11.300 5.500a5.500 5.500 0 1 1 0 11 5.500 5.500 0 0 1 0-11z" />
              </svg>
              <PinLabel>{label}</PinLabel>
            </Pin>
          ))}
          <Attribution>© <span>OpenStreetMap</span> contributors.</Attribution>
        </MapBox>
        <Controls>
          <CheckBox><Icon width="14" height="14"><path d="M3.200 7.200l2.800 3 4.800-6.400" stroke="#fff" strokeWidth="2" /></Icon></CheckBox>
          <span>Refresh every <b>5000 msec</b> | Limit view to time frame:</span>
          <Field $w={107}>Whole day<Icon width="9" height="7"><path d="M1.500 1.500l3 3 3-3" /></Icon></Field>
          <Field $w={60}>Refresh</Field>
        </Controls>
        <Summary>
          <u>Earlier</u> | <u>Today</u> | <u>Later</u> | <b>188</b> frames in logfile: <b>2025-04-30.log</b> | <b>186</b> frames on Interface <b>ICOM IC-9700 - 144.800MHz</b>
        </Summary>
        <Table>
          <colgroup>{columns.map(([n, , w]) => <col key={n} style={{ width: w }} />)}</colgroup>
          <thead>
            <tr>{columns.map(([n, a]) => <th key={n}>{n} <Arrow>{a}</Arrow></th>)}</tr>
          </thead>
          <tbody>
            {rows.map((r) => (
              <tr key={r[0]}>
                <LinkCell>{r[0]}</LinkCell>
                <LinkCell>{r[1]}</LinkCell>
                <Cell $c={tint[r[2]]}>{r[2]}</Cell>
                <Cell $c={tint[r[3]]}>{r[3]}</Cell>
                <Cell>{r[4]} 30-04-2025</Cell>
                <Cell>{r[5]}</Cell>
                <Cell>{r[6]}</Cell>
                <Cell>{r[7]}</Cell>
              </tr>
            ))}
          </tbody>
        </Table>
      </Page>
    </Window>
  );
}
